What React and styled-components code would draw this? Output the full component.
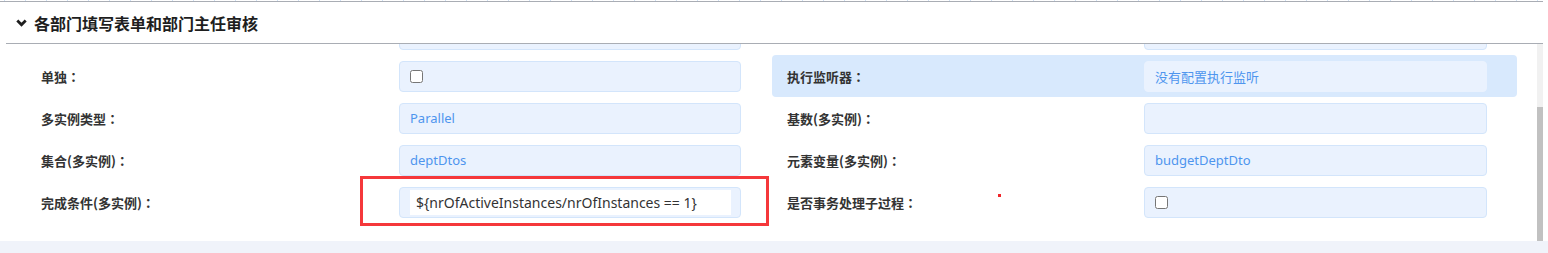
import React, { useLayoutEffect, useRef } from 'react'
import styled, { createGlobalStyle } from 'styled-components'

const GlobalStyle = createGlobalStyle`
  html, body {
    margin: 0;
    padding: 0;
    background: #ffffff;
    font-family: "Noto Sans", "Noto Sans CJK SC", sans-serif;
  }
`

const Page = styled.div`
  position: relative;
  width: 1548px;
  height: 253px;
  overflow: hidden;
  background: #ffffff;
`

const Panel = styled.div`
  width: 1543px;
  background: #ffffff;
`

const TickRow = styled.div`
  height: 1px;
  background: repeating-linear-gradient(
    to right,
    #ffffff 0px,
    #ffffff 4px,
    #cfe1f6 4px,
    #cfe1f6 5px,
    #ffffff 5px,
    #ffffff 21px
  );
  border-bottom: 1px solid #a9adb4;
`

const Header = styled.div`
  margin-left: 6px;
  height: 41px;
  display: flex;
  align-items: center;
  gap: 7px;
  padding-left: 10px;
  border-bottom: 1px solid #a9adb4;
`

const Title = styled.h3`
  margin: 0;
  font-family: "Noto Sans CJK SC", sans-serif;
  font-size: 16px;
  font-weight: 700;
  color: #1e1e1e;
`

const Body = styled.div`
  display: flex;
  height: 197px;
`

const Viewport = styled.div`
  flex: 1;
  overflow: hidden;
  padding-left: 6px;
`

// drawn scrollbar, the panel is scrolled to its end
const Track = styled.div`
  width: 6px;
  display: flex;
  flex-direction: column;
  justify-content: flex-end;
  background: #f1f1f1;
`

const Thumb = styled.div`
  height: 134px;
  background: #c1c1c1;
`

const Rows = styled.div`
  padding-top: 20px;
  padding-bottom: 18px;
`

const Row = styled.div`
  display: flex;
  height: 42px;
`

const Half = styled.div`
  display: flex;
  align-items: center;
  width: ${p => (p.$side === 'left' ? '766px' : '745px')};
  padding-left: ${p => (p.$side === 'left' ? '35px' : '15px')};
  box-sizing: border-box;
  background: ${p => (p.$active ? '#d8e9fd' : 'transparent')};
  border-radius: 4px;
`

const Label = styled.div`
  width: ${p => (p.$side === 'left' ? '358px' : '357px')};
  font-family: "Noto Sans CJK SC", sans-serif;
  font-size: 13px;
  font-weight: 700;
  color: #333333;
  white-space: nowrap;
`

const Colon = styled.span`
  font-family: "Noto Sans CJK TC", sans-serif;
`

const Field = styled.div`
  box-sizing: border-box;
  width: ${p => (p.$side === 'left' ? '342px' : '343px')};
  height: 31px;
  display: flex;
  align-items: center;
  padding: ${p => (p.$edit ? '2px 9px 2px 10px' : '0 10px')};
  background: #eaf2fe;
  border: 1px solid ${p => (p.$active ? '#eaf2fe' : '#d3e5fb')};
  border-radius: 4px;
  font-family: "Noto Sans", "Noto Sans CJK SC", sans-serif;
  font-size: 13px;
  color: #4e95ee;
  white-space: nowrap;
  overflow: hidden;
`

const Check = styled.input`
  margin: 0;
  width: 13px;
  height: 13px;
`

const Editor = styled.div`
  flex: 1;
  height: 25px;
  display: flex;
  align-items: center;
  padding-left: 6px;
  background: #ffffff;
  font-family: "Noto Sans", sans-serif;
  font-size: 14px;
  color: #333333;
`

const Footer = styled.div`
  height: 12px;
  background: #f0f3fa;
`

const Marker = styled.div`
  position: absolute;
  left: 360px;
  top: 176px;
  width: 409px;
  height: 50px;
  box-sizing: border-box;
  border: 3px solid #f5383b;
  pointer-events: none;
`

const Dot = styled.div`
  position: absolute;
  left: 998px;
  top: 194px;
  width: 3px;
  height: 3px;
  background: #f0262a;
`

function Chevron() {
  return (
    <svg width="11" height="8" viewBox="0 0 11 8">
      <polyline points="1.3,1.5 5.5,5.7 9.7,1.5" fill="none" stroke="#1e1e1e" strokeWidth="2.8" />
    </svg>
  )
}

function FieldLabel({ side, text }) {
  return (
    <Label $side={side}>
      {text}
      {text && <Colon>：</Colon>}
    </Label>
  )
}

function Value({ side, item }) {
  if (item.type === 'check') {
    return (
      <Field $side={side}>
        <Check type="checkbox" readOnly />
      </Field>
    )
  }
  if (item.type === 'edit') {
    return (
      <Field $side={side} $edit>
        <Editor>{item.value}</Editor>
      </Field>
    )
  }
  return (
    <Field $side={side} $active={item.active}>
      {item.value}
    </Field>
  )
}

const rows = [
  { left: { label: '', type: 'text', value: '' }, right: { label: '', type: 'text', value: '' } },
  { left: { label: '', type: 'text', value: '' }, right: { label: '', type: 'text', value: '' } },
  {
    left: { label: '单独', type: 'check' },
    right: { label: '执行监听器', type: 'text', value: '没有配置执行监听', active: true },
  },
  {
    left: { label: '多实例类型', type: 'text', value: 'Parallel' },
    right: { label: '基数(多实例)', type: 'text', value: '' },
  },
  {
    left: { label: '集合(多实例)', type: 'text', value: 'deptDtos' },
    right: { label: '元素变量(多实例)', type: 'text', value: 'budgetDeptDto' },
  },
  {
    left: { label: '完成条件(多实例)', type: 'edit', value: '${nrOfActiveInstances/nrOfInstances == 1}' },
    right: { label: '是否事务处理子过程', type: 'check' },
  },
]

export default function App() {
  const viewRef = useRef(null)

  useLayoutEffect(() => {
    if (viewRef.current) viewRef.current.scrollTop = viewRef.current.scrollHeight
  }, [])

  return (
    <Page>
      <GlobalStyle />
      <Panel>
        <TickRow />
        <Header>
          <Chevron />
          <Title>各部门填写表单和部门主任审核</Title>
        </Header>
        <Body>
          <Viewport ref={viewRef}>
            <Rows>
              {rows.map((r, i) => (
                <Row key={i}>
                  <Half $side="left">
                    <FieldLabel side="left" text={r.left.label} />
                    <Value side="left" item={r.left} />
                  </Half>
                  <Half $side="right" $active={r.right.active}>
                    <FieldLabel side="right" text={r.right.label} />
                    <Value side="right" item={r.right} />
                  </Half>
                </Row>
              ))}
            </Rows>
          </Viewport>
          <Track>
            <Thumb />
          </Track>
        </Body>
      </Panel>
      <Footer />
      <Marker />
      <Dot />
    </Page>
  )
}
